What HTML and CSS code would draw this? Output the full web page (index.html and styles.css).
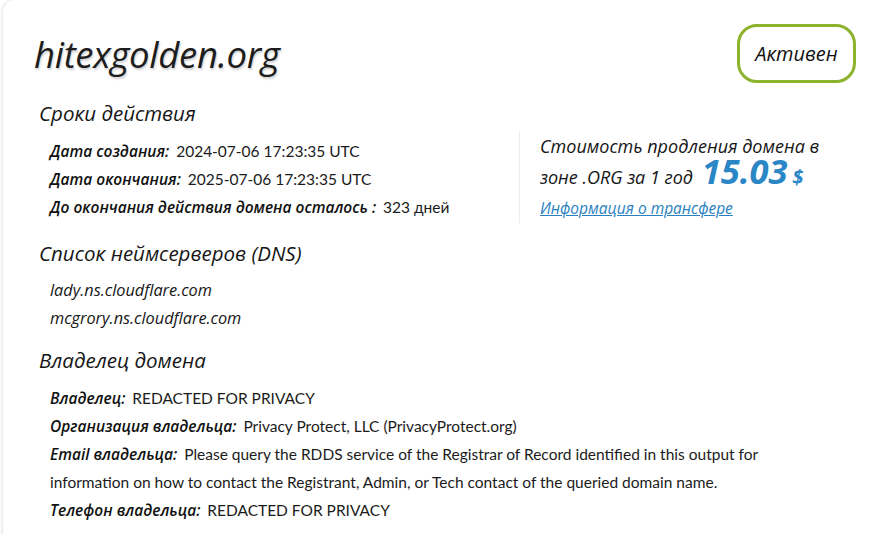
FILE: index.html
```html
<!DOCTYPE html>
<html lang="ru">
<head>
<meta charset="utf-8">
<title>hitexgolden.org</title>
<link rel="stylesheet" href="styles.css">
</head>
<body>
<div class="card">
  <header class="top">
    <h1 class="domain">hitexgolden.org</h1>
    <span class="badge">Активен</span>
  </header>

  <h2 class="section">Сроки действия</h2>
  <div class="term">
    <ul class="rows">
      <li><span class="label">Дата создания:</span> <span class="val">2024-07-06 17:23:35 UTC</span></li>
      <li><span class="label">Дата окончания:</span> <span class="val">2025-07-06 17:23:35 UTC</span></li>
      <li><span class="label">До окончания действия домена осталось :</span> <span class="val">323 дней</span></li>
    </ul>
    <div class="price">
      <p class="price-text">Стоимость продления домена в<br>зоне .ORG за 1 год <span class="amount">15.03</span> <span class="cur">$</span></p>
      <a class="transfer" href="#">Информация о трансфере</a>
    </div>
  </div>

  <h2 class="section dns">Список неймсерверов (DNS)</h2>
  <ul class="ns">
    <li>lady.ns.cloudflare.com</li>
    <li>mcgrory.ns.cloudflare.com</li>
  </ul>

  <h2 class="section owner-h">Владелец домена</h2>
  <ul class="rows owner">
    <li><span class="label">Владелец:</span> <span class="val">REDACTED FOR PRIVACY</span></li>
    <li><span class="label">Организация владельца:</span> <span class="val">Privacy Protect, LLC (PrivacyProtect.org)</span></li>
    <li><span class="label">Email владельца:</span> <span class="val">Please query the RDDS service of the Registrar of Record identified in this output for<br>information on how to contact the Registrant, Admin, or Tech contact of the queried domain name.</span></li>
    <li><span class="label">Телефон владельца:</span> <span class="val">REDACTED FOR PRIVACY</span></li>
  </ul>
</div>
</body>
</html>
```

FILE: styles.css
```css
* { box-sizing: border-box; }
html, body {
  margin: 0;
  padding: 0;
  background: #ffffff;
}
body {
  font-family: "Lato", "Noto Sans", sans-serif;
  color: #1b1b1b;
  overflow: hidden;
}
.card {
  margin-left: 3px;
  min-height: 560px;
  background: #fff;
  border-radius: 12px 0 0 0;
  box-shadow: -1px 0 3px rgba(0, 0, 0, 0.12);
  padding: 24px 32px 0 0;
}
.top {
  display: flex;
  justify-content: space-between;
  align-items: center;
  padding-left: 31px;
}
.domain {
  margin: 0;
  font-family: "Open Sans", "Noto Sans", sans-serif;
  font-style: italic;
  font-weight: 400;
  font-size: 36.5px;
  line-height: 40px;
  color: #1d1d1d;
  letter-spacing: -0.3px;
  text-shadow: 1px 2px 2px rgba(0, 0, 0, 0.18);
  padding-top: 1px;
}
.badge {
  display: inline-flex;
  align-items: center;
  justify-content: center;
  width: 119px;
  height: 59px;
  border: 3px solid #8db32c;
  border-radius: 20px;
  font-family: "Open Sans", "Noto Sans", sans-serif;
  font-style: italic;
  font-size: 20px;
  color: #111;
}
.section {
  margin: 16px 0 0 36px;
  font-family: "Open Sans", "Noto Sans", sans-serif;
  font-style: italic;
  font-weight: 400;
  font-size: 20.5px;
  line-height: 28px;
  color: #161616;
}
.term {
  display: flex;
  margin-top: 4px;
}
.rows {
  list-style: none;
  margin: 0;
  padding: 6px 0 2px 47px;
  font-size: 15.5px;
  line-height: 28px;
}
.term .rows {
  width: 516px;
}
.label {
  font-family: "Open Sans", "Noto Sans", sans-serif;
  font-style: italic;
  font-weight: 600;
  font-size: 15.5px;
  line-height: 18px;
  color: #111;
  margin-right: 3px;
}
.val {
  font-family: "Lato", "Noto Sans", sans-serif;
  line-height: 18px;
  color: #1b1b1b;
}
.price {
  border-left: 1px solid #ededed;
  padding-left: 20px;
}
.price-text {
  margin: 0;
  font-family: "Open Sans", "Noto Sans", sans-serif;
  font-style: italic;
  font-size: 18px;
  line-height: 30px;
  color: #161616;
}
.amount {
  font-weight: 700;
  font-size: 34.5px;
  line-height: 20px;
  color: #2a86c5;
  margin-left: 4px;
}
.cur {
  font-weight: 700;
  font-size: 20px;
  line-height: 20px;
  color: #2a86c5;
}
.transfer {
  display: inline-block;
  margin-top: 4px;
  font-family: "Open Sans", "Noto Sans", sans-serif;
  font-style: italic;
  font-weight: 500;
  font-size: 15.5px;
  line-height: 24px;
  color: #2a7fc0;
  text-decoration: underline;
}
.dns {
  margin-top: 16px;
}
.ns {
  list-style: none;
  margin: 9px 0 0;
  padding: 0 0 0 47px;
  font-family: "Open Sans", "Noto Sans", sans-serif;
  font-style: italic;
  font-size: 16.3px;
  line-height: 28px;
  color: #161616;
}
.owner-h {
  margin-top: 14px;
}
.owner {
  padding-top: 10px;
}
```
